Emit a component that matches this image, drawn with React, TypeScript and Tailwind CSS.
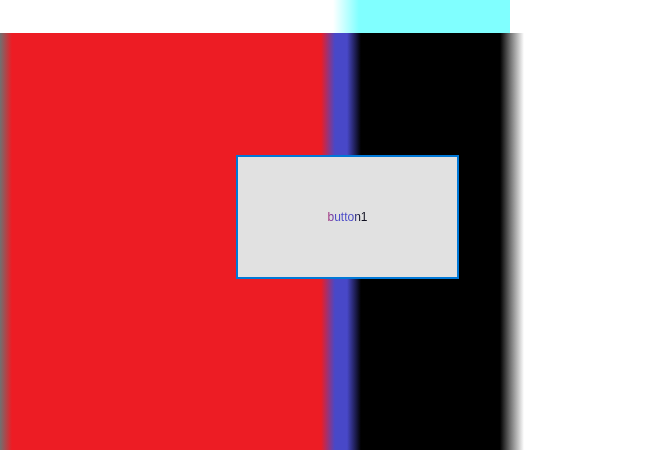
import React from 'react';

const App = () => {
  return (
    <div className="w-[671px] h-[450px] flex flex-col bg-white overflow-hidden">
      {/* top strip */}
      <div className="h-[33px] flex shrink-0">
        <div className="w-[333px]" />
        <div className="w-[177px] bg-[linear-gradient(to_right,#ffffff_0px,#80ffff_26px,#80ffff_100%)]" />
      </div>

      {/* main canvas */}
      <div className="relative flex-1 bg-[linear-gradient(to_right,#707070_0px,#ed1c24_12px,#ed1c24_321px,#4848c8_335px,#4848c8_347px,#000000_361px,#000000_500px,#7a7a7a_511px,#ffffff_524px)]">
        <button className="absolute left-[236px] top-[122px] w-[223px] h-[124px] bg-[#e1e1e1] border-2 border-[#0078d7] flex items-center justify-center">
          <span className="text-[12px] leading-none font-['Liberation_Sans',Arial,sans-serif] bg-[linear-gradient(to_right,#b0286c_0%,#4848c8_22%,#4848c8_62%,#101020_80%)] bg-clip-text text-transparent">
            button1
          </span>
        </button>
      </div>
    </div>
  );
};

export default App;
